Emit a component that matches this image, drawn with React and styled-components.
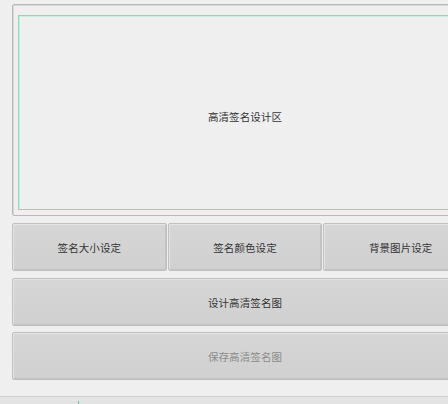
import React from "react";
import styled, { createGlobalStyle } from "styled-components";

const GlobalStyle = createGlobalStyle`
  html, body {
    margin: 0;
    padding: 0;
    background: #efefef;
    overflow: hidden;
  }
  body {
    font-family: "Noto Sans CJK SC", "Noto Sans", sans-serif;
  }
`;

const Page = styled.div`
  width: 466px;
  padding: 4px 0 0 12px;
  display: flex;
  flex-direction: column;
`;

const Panel = styled.div`
  height: 212px;
  box-sizing: border-box;
  border: 1px solid #b9b9b9;
  border-radius: 2px;
  box-shadow: inset 1px 1px 0 #d6d6d6;
  padding: 10px 5px 5px 5px;
  display: flex;
`;

const DesignArea = styled.div`
  flex: 1;
  border: 1px solid #86dcb6;
  box-shadow: inset 1px 1px 0 #c8eedd;
  display: flex;
  align-items: center;
  justify-content: center;
  padding-top: 8px;
  font-size: 10.5px;
  color: #333;
  letter-spacing: 0.1px;
`;

const Row = styled.div`
  display: flex;
  gap: 1px;
  margin-top: ${(p) => p.$gap}px;
`;

const Button = styled.button`
  flex: 1;
  height: 48px;
  box-sizing: border-box;
  border: 1px solid #bcc1bf;
  border-radius: 2px;
  background: linear-gradient(#d6d6d6, #d0d0d0);
  box-shadow: inset 1px 1px 0 #e4e4e4, inset -1px -1px 0 #c4c4c4;
  font-family: "Noto Sans CJK SC", "Noto Sans", sans-serif;
  font-size: 10.5px;
  letter-spacing: 0.1px;
  color: ${(p) => (p.disabled ? "#8c8c8c" : "#333")};
  padding: 0;
  cursor: default;
`;

const StatusBar = styled.div`
  margin-top: 16px;
  margin-left: -12px;
  width: 478px;
  height: 10px;
  border-top: 1px solid #c9cfcc;
  background: #e3e3e3;
  position: relative;
`;

const Tick = styled.span`
  position: absolute;
  left: 78px;
  top: 4px;
  width: 1px;
  height: 8px;
  background: #4fcf9e;
`;

export default function App() {
  return (
    <>
      <GlobalStyle />
      <Page>
        <Panel>
          <DesignArea>高清签名设计区</DesignArea>
        </Panel>
        <Row $gap={7}>
          <Button>签名大小设定</Button>
          <Button>签名颜色设定</Button>
          <Button>背景图片设定</Button>
        </Row>
        <Row $gap={7}>
          <Button>设计高清签名图</Button>
        </Row>
        <Row $gap={6}>
          <Button disabled>保存高清签名图</Button>
        </Row>
        <StatusBar>
          <Tick />
        </StatusBar>
      </Page>
    </>
  );
}
